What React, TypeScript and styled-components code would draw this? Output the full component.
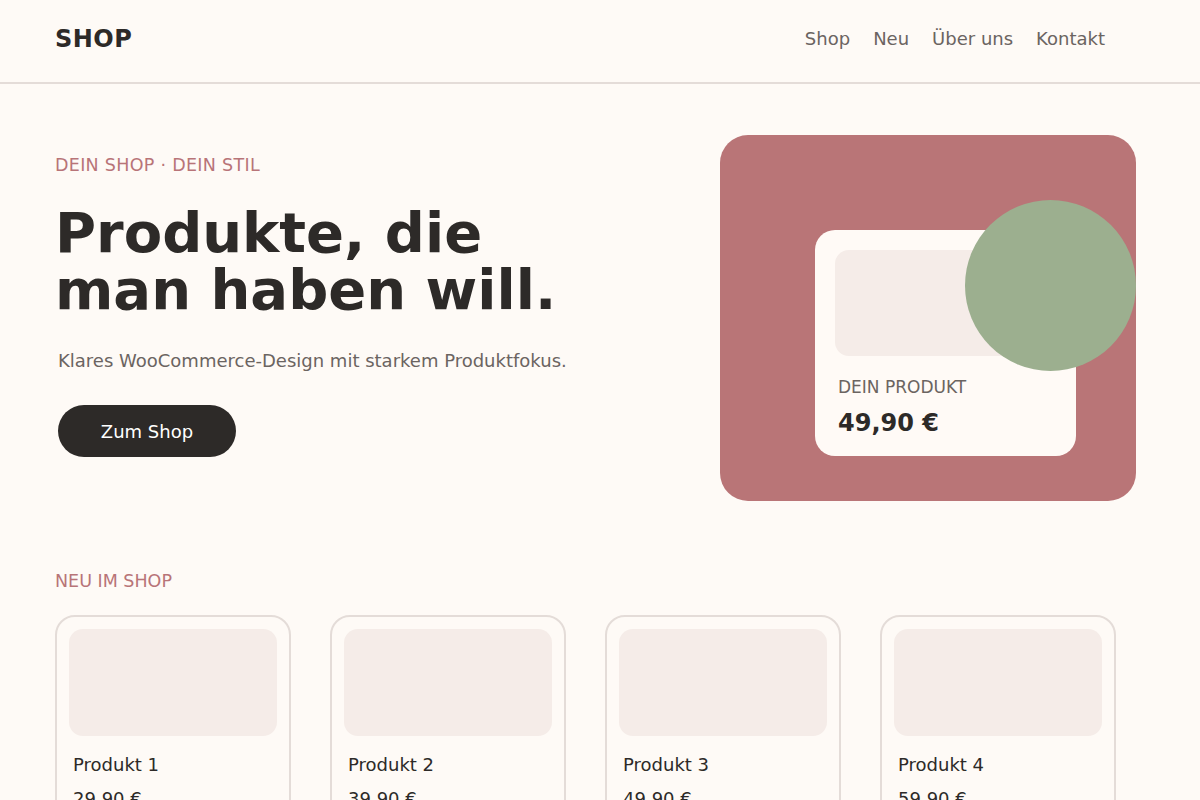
import React from "react";
import styled, { createGlobalStyle } from "styled-components";

const Global = createGlobalStyle`
  html, body { margin: 0; padding: 0; background: #fefaf6; }
  body { font-family: "DejaVu Sans", Verdana, sans-serif; color: #2d2a28; }
  * { box-sizing: border-box; }
`;

const Header = styled.header`
  height: 84px;
  border-bottom: 2px solid #e4dcd8;
  display: flex;
  align-items: center;
  justify-content: space-between;
  padding: 0 95px 5px 55px;
`;

const Logo = styled.div`
  font-size: 24px;
  font-weight: 700;
  letter-spacing: 0.5px;
  color: #2d2a28;
`;

const Nav = styled.nav`
  display: flex;
  gap: 23px;
`;

const NavLink = styled.a`
  font-size: 18px;
  color: #6b6461;
  text-decoration: none;
`;

const Hero = styled.section`
  display: flex;
  justify-content: space-between;
  padding: 51px 64px 0 55px;
`;

const HeroText = styled.div`
  display: flex;
  flex-direction: column;
  padding-top: 20px;
`;

const Eyebrow = styled.div`
  font-size: 17.5px;
  color: #b87478;
  letter-spacing: 0.3px;
`;

const Title = styled.h1`
  margin: 29px 0 0;
  font-size: 56px;
  line-height: 57px;
  font-weight: 700;
  color: #2d2a28;
`;

const Lead = styled.p`
  margin: 32px 0 0 3px;
  font-size: 18px;
  color: #6b6461;
`;

const Button = styled.a`
  margin: 34px 0 0 3px;
  width: 178px;
  height: 52px;
  border-radius: 26px;
  background: #2d2a28;
  color: #ffffff;
  font-size: 18px;
  display: flex;
  align-items: center;
  justify-content: center;
  text-decoration: none;
`;

const Visual = styled.div`
  position: relative;
  width: 416px;
  height: 366px;
  border-radius: 28px;
  background: #b97577;
  display: flex;
  align-items: flex-start;
  padding: 95px 0 0 95px;
  overflow: hidden;
`;

const ProductCard = styled.div`
  width: 261px;
  height: 226px;
  border-radius: 20px;
  background: #fffaf6;
  padding: 20px 20px 0 20px;
  display: flex;
  flex-direction: column;
`;

const ProductImage = styled.div`
  height: 106px;
  border-radius: 14px;
  background: #f5ece8;
`;

const ProductLabel = styled.div`
  margin: 21px 0 0 3px;
  font-size: 17px;
  color: #6b6461;
`;

const ProductPrice = styled.div`
  margin: 12px 0 0 3px;
  font-size: 24px;
  font-weight: 700;
  color: #2d2a28;
`;

const Circle = styled.div`
  position: absolute;
  left: 245px;
  top: 65px;
  width: 171px;
  height: 171px;
  border-radius: 50%;
  background: #9caf8f;
`;

const Section = styled.section`
  padding: 70px 0 0 55px;
`;

const SectionTitle = styled.div`
  font-size: 17.5px;
  color: #b87478;
`;

const Grid = styled.div`
  margin-top: 24px;
  display: grid;
  grid-template-columns: repeat(4, 236px);
  gap: 39px;
`;

const Card = styled.div`
  border: 2px solid #e4dcd8;
  border-radius: 20px;
  padding: 12px 12px 20px;
  height: 260px;
`;

const CardImage = styled.div`
  height: 107px;
  border-radius: 14px;
  background: #f5ece8;
`;

const CardName = styled.div`
  margin: 18px 0 0 4px;
  font-size: 18px;
  color: #2d2a28;
`;

const CardPrice = styled.div`
  margin: 13px 0 0 4px;
  font-size: 18px;
  color: #2d2a28;
`;

const products = [
  { name: "Produkt 1", price: "29,90 €" },
  { name: "Produkt 2", price: "39,90 €" },
  { name: "Produkt 3", price: "49,90 €" },
  { name: "Produkt 4", price: "59,90 €" },
];

export default function App() {
  return (
    <>
      <Global />
      <Header>
        <Logo>SHOP</Logo>
        <Nav>
          <NavLink>Shop</NavLink>
          <NavLink>Neu</NavLink>
          <NavLink>Über uns</NavLink>
          <NavLink>Kontakt</NavLink>
        </Nav>
      </Header>
      <Hero>
        <HeroText>
          <Eyebrow>DEIN SHOP · DEIN STIL</Eyebrow>
          <Title>
            Produkte, die
            <br />
            man haben will.
          </Title>
          <Lead>Klares WooCommerce-Design mit starkem Produktfokus.</Lead>
          <Button>Zum Shop</Button>
        </HeroText>
        <Visual>
          <ProductCard>
            <ProductImage />
            <ProductLabel>DEIN PRODUKT</ProductLabel>
            <ProductPrice>49,90 €</ProductPrice>
          </ProductCard>
          <Circle />
        </Visual>
      </Hero>
      <Section>
        <SectionTitle>NEU IM SHOP</SectionTitle>
        <Grid>
          {products.map((p) => (
            <Card key={p.name}>
              <CardImage />
              <CardName>{p.name}</CardName>
              <CardPrice>{p.price}</CardPrice>
            </Card>
          ))}
        </Grid>
      </Section>
    </>
  );
}
